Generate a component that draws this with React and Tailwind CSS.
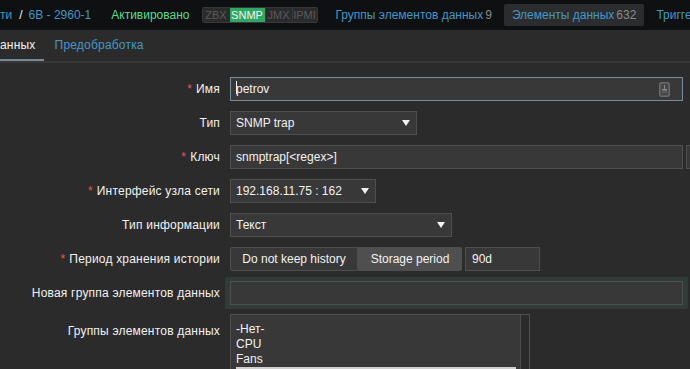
import React from "react";

const font = { fontFamily: '"Liberation Sans", Arial, sans-serif' };

function Arrow() {
    return (
        <svg width="8" height="6" viewBox="0 0 8 6" className="shrink-0">
            <path d="M0 0 H8 L4 6 Z" fill="#f2f2f2" />
        </svg>
    );
}

function Label({ children, required }) {
    return (
        <div className="w-[220px] shrink-0 text-right text-[12px] text-[#f2f2f2] tracking-[0.2px]">
            {required && <span className="text-[#e45959] mr-[4px]">*</span>}
            {children}
        </div>
    );
}

function Row({ label, required, className = "", children }) {
    return (
        <div className={"flex items-center " + className}>
            <Label required={required}>{label}</Label>
            <div className="ml-[10px] flex items-center">{children}</div>
        </div>
    );
}

function Select({ value, width }) {
    return (
        <div
            className={
                "h-[24px] bg-[#383838] border border-[#4f4f4f] flex items-center justify-between pl-[5px] pr-[6px] text-[12px] text-[#f2f2f2] " +
                width
            }
        >
            <span>{value}</span>
            <Arrow />
        </div>
    );
}

export default function App() {
    return (
        <div style={font} className="w-[690px] h-[369px] overflow-hidden bg-[#2b2b2b] text-[12px]">
            {/* header */}
            <div className="h-[30px] bg-[#0e1012] flex items-center whitespace-nowrap overflow-hidden">
                <span className="shrink-0 text-[#4796c4]">ти</span>
                <span className="shrink-0 text-[#f2f2f2] ml-[7px] mr-[6px]">/</span>
                <span className="shrink-0 text-[#4796c4]">6B - 2960-1</span>
                <span className="shrink-0 text-[#59db8f] ml-[20px]">Активировано</span>
                <div className="shrink-0 ml-[12px] flex h-[16px] border border-[#383838] rounded-[2px] text-[11px] overflow-hidden">
                    <span className="w-[27px] justify-center bg-[#2b2b2b] text-[#5a5a5a] flex items-center">ZBX</span>
                    <span className="w-[35px] justify-center bg-[#2fa864] text-[#f2f2f2] flex items-center">SNMP</span>
                    <span className="w-[27px] justify-center bg-[#2b2b2b] text-[#5a5a5a] border-l border-[#383838] flex items-center">JMX</span>
                    <span className="w-[25px] justify-center bg-[#2b2b2b] text-[#5a5a5a] border-l border-[#383838] flex items-center">IPMI</span>
                </div>
                <span className="shrink-0 text-[#4796c4] ml-[18px]">
                    Группы элементов данных<span className="text-[#8a8a8a] ml-[2px]">9</span>
                </span>
                <span className="shrink-0 ml-[12px] h-[22px] px-[8px] bg-[#2b2c2e] rounded-[2px] flex items-center text-[#4796c4]">
                    Элементы данных<span className="text-[#8a8a8a] ml-[2px]">632</span>
                </span>
                <span className="shrink-0 text-[#4796c4] ml-[12px]">Триггеры</span>
            </div>

            {/* tabs */}
            <div className="h-[33px] flex items-end border-b-2 border-[#383838] whitespace-nowrap">
                <div className="h-full flex flex-col justify-center relative pr-[8px]">
                    <span className="text-[#f2f2f2] -mt-[1px] tracking-[0.2px]">анных</span>
                    <div className="absolute left-0 right-0 bottom-0 h-[2px] bg-[#768d99]" />
                </div>
                <div className="h-full flex items-center ml-[11px]">
                    <span className="text-[#4796c4] -mt-[1px] tracking-[0.2px]">Предобработка</span>
                </div>
            </div>

            {/* form */}
            <div className="pt-[14px]">
                <Row label="Имя" required>
                    <div className="w-[453px] h-[24px] bg-[#383838] border border-[#768d99] flex items-center justify-between pl-[5px] pr-[12px] text-[#f2f2f2]">
                        <span className="relative">
                            <span className="absolute left-0 top-[1px] w-[1px] h-[13px] bg-[#f2f2f2]" />
                            petrov
                        </span>
                        <svg width="11" height="15" viewBox="0 0 11 15">
                            <rect x="0.75" y="0.75" width="9.5" height="13.5" rx="2" fill="#474747" stroke="#6a6a6a" strokeWidth="1.5" />
                            <rect x="5" y="3" width="1" height="4" fill="#8a8a8a" />
                            <rect x="3" y="7" width="5" height="1.5" fill="#8a8a8a" />
                            <rect x="3" y="9.5" width="5" height="1" fill="#6a6a6a" />
                        </svg>
                    </div>
                </Row>

                <Row label="Тип" className="mt-[10px]">
                    <Select value="SNMP trap" width="w-[187px]" />
                </Row>

                <Row label="Ключ" required className="mt-[10px]">
                    <div className="w-[453px] h-[24px] bg-[#383838] border border-[#4f4f4f] flex items-center pl-[5px] text-[#f2f2f2]">
                        snmptrap[&lt;regex&gt;]
                    </div>
                    <div className="ml-[3px] w-[20px] h-[24px] bg-[#383838] border border-[#4f4f4f] shrink-0" />
                </Row>

                <Row label="Интерфейс узла сети" required className="mt-[10px]">
                    <Select value="192.168.11.75 : 162" width="w-[146px]" />
                </Row>

                <Row label="Тип информации" className="mt-[10px]">
                    <Select value="Текст" width="w-[222px]" />
                </Row>

                <Row label="Период хранения истории" required className="mt-[10px]">
                    <div className="flex h-[24px]">
                        <div className="w-[128px] bg-[#383838] border border-[#4f4f4f] rounded-l-[2px] flex items-center justify-center text-[#f2f2f2]">
                            Do not keep history
                        </div>
                        <div className="w-[104px] bg-[#4f4f4f] border border-[#4f4f4f] rounded-r-[2px] flex items-center justify-center text-[#f2f2f2]">
                            Storage period
                        </div>
                        <div className="ml-[3px] w-[75px] bg-[#383838] border border-[#4f4f4f] flex items-center pl-[6px] text-[#f2f2f2]">
                            90d
                        </div>
                    </div>
                </Row>

                <div className="flex items-center mt-[6px]">
                    <Label>Новая группа элементов данных</Label>
                    <div className="ml-[5px] px-[5px] py-[4px] bg-[#2f3d36] rounded-[2px]">
                        <div className="w-[453px] h-[24px] bg-[#383838] border border-[#4f4f4f]" />
                    </div>
                </div>

                <div className="flex items-start mt-[5px]">
                    <div className="pt-[8px]">
                        <Label>Группы элементов данных</Label>
                    </div>
                    <div className="ml-[10px] w-[300px] h-[60px] bg-[#383838] border border-[#4f4f4f] flex">
                        <div className="flex-1 pl-[5px] pt-[7px] pr-[4px] text-[#f2f2f2] leading-[15px]">
                            <div>-Нет-</div>
                            <div>CPU</div>
                            <div>Fans</div>
                            <div className="bg-[#cfcfcf] h-[15px]" />
                        </div>
                        <div className="w-[9px] bg-[#2b2b2b] border-l border-[#4f4f4f]" />
                    </div>
                </div>
            </div>
        </div>
    );
}
